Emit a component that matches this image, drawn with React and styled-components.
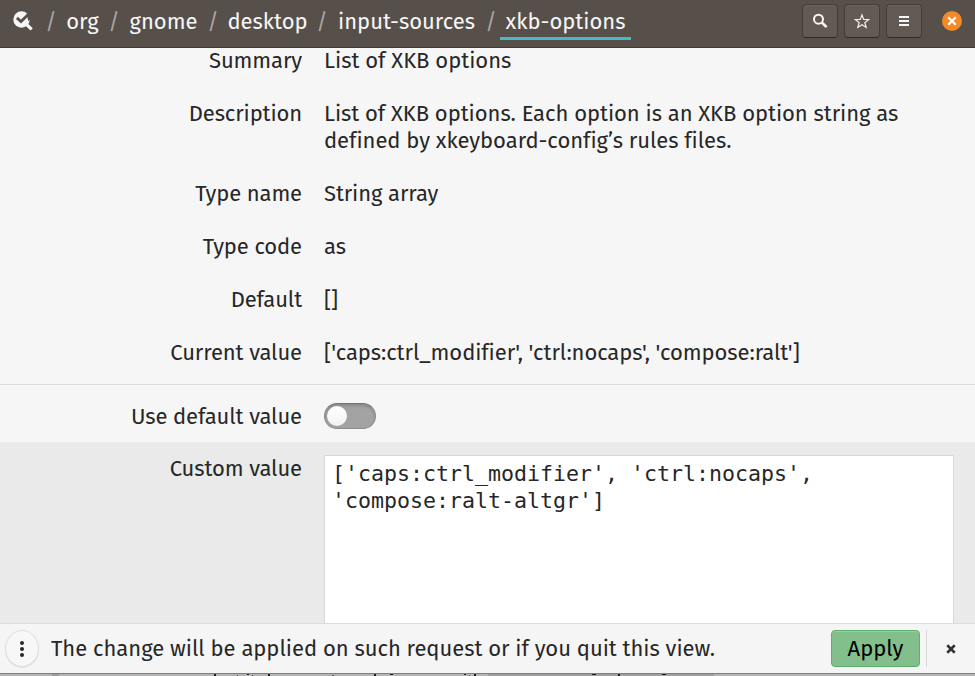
import React from 'react';
import styled, { createGlobalStyle, css } from 'styled-components';

const Global = createGlobalStyle`
  * { box-sizing: border-box; }
  html, body { margin: 0; padding: 0; overflow: hidden; }
  body {
    font-family: "Fira Sans", "Noto Sans", sans-serif;
    font-size: 22px;
    line-height: 27px;
    color: #272727;
    background: #f6f6f6;
  }
`;

const Window = styled.div`
  width: 975px;
  height: 676px;
  display: flex;
  flex-direction: column;
  overflow: hidden;
  background: #f6f6f6;
`;

const HeaderBar = styled.header`
  flex: none;
  height: 48px;
  display: flex;
  align-items: flex-start;
  background: #574f4a;
  border-bottom: 1px solid #473437;
  color: #f6f6f6;
`;

const PathIcon = styled.svg`
  flex: none;
  margin: 11px 0 0 13px;
`;

const Breadcrumbs = styled.nav`
  flex: 1;
  display: flex;
  padding-left: 8px;
`;

const Slash = styled.span`
  flex: none;
  width: 18px;
  margin-top: 8px;
  text-align: center;
  color: #aaa6a3;
`;

const Crumb = styled.span`
  flex: none;
  height: 40px;
  width: ${(p) => p.$width}px;
  padding-top: 8px;
  text-align: center;
  white-space: nowrap;
  ${(p) => p.$active && css`
    background: linear-gradient(#48b9c7, #48b9c7) bottom / 100% 3px no-repeat;
    clip-path: polygon(0 0, 100% 0, 100% 100%, 0 100%);
  `}
`;

const HeaderButtons = styled.div`
  display: flex;
  gap: 6px;
  padding-top: 4px;
`;

const HeaderButton = styled.button`
  width: 36px;
  height: 34px;
  padding: 0;
  display: flex;
  align-items: center;
  justify-content: center;
  border: 1px solid #433c38;
  border-bottom-color: #2f2a27;
  border-radius: 4px;
  background: #635a54;
  box-shadow: inset 0 1px #6c635e;
`;

const CloseWindow = styled.button`
  width: 20px;
  height: 20px;
  padding: 0;
  margin: 11px 13px 0 20px;
  border: 0;
  border-radius: 50%;
  display: flex;
  align-items: center;
  justify-content: center;
  background: #f28b27;
`;

const Properties = styled.section`
  flex: none;
  height: 338px;
  margin-top: -1px;
  display: flex;
  flex-direction: column;
  gap: 26px;
  border-bottom: 1px solid #dcdcdc;
`;

const Row = styled.div`
  display: grid;
  grid-template-columns: 302px 630px;
  column-gap: 22px;
`;

const Label = styled.div`
  text-align: right;
  white-space: nowrap;
  letter-spacing: -0.12px;
`;

const Value = styled.div`
  white-space: pre;
  letter-spacing: ${(p) => p.$tracking || 0}px;
`;

const DefaultSection = styled.section`
  flex: none;
  height: 57px;
  padding-top: 18px;
`;

const Switch = styled.div`
  width: 52px;
  height: 26px;
  border: 1px solid #8c8c8c;
  border-top-color: #757575;
  border-radius: 13px;
  background: #a3a3a3;
  box-shadow: inset 0 2px 3px rgba(0, 0, 0, 0.16);
  padding: 2px;
`;

const Knob = styled.div`
  width: 20px;
  height: 20px;
  border-radius: 50%;
  background: linear-gradient(#fff, #f2f2f2);
`;

const CustomSection = styled.section`
  flex: 1;
  min-height: 0;
  padding-top: 13px;
  background: #eaeaea;
`;

const Editor = styled.div`
  height: 180px;
  padding: 4px 7px;
  border: 1px solid #d8d8d8;
  background: #fff;
  font-family: "DejaVu Sans Mono", monospace;
  font-size: 21.6px;
  line-height: 27px;
  white-space: pre;
`;

const Notice = styled.footer`
  flex: none;
  position: relative;
  height: 50px;
  display: flex;
  align-items: center;
  padding: 0 0 0 5px;
  border-top: 1px solid #dcdcdc;
  background: #f5f5f5;
`;

const MenuButton = styled.button`
  width: 34px;
  height: 37px;
  padding: 0;
  border: 1px solid #dedede;
  border-radius: 50%;
  display: flex;
  align-items: center;
  justify-content: center;
  background: #f7f7f7;
  box-shadow: 0 1px 1px rgba(0, 0, 0, 0.08);
`;

const Message = styled.div`
  flex: 1;
  margin-left: 12px;
  white-space: nowrap;
  letter-spacing: -0.025px;
`;

const ApplyButton = styled.button`
  width: 89px;
  height: 37px;
  padding: 0;
  border: 1px solid #5bb16b;
  border-radius: 4px;
  background: #83bf8d;
  box-shadow: inset 0 1px #9acca2;
  font: inherit;
  color: #000;
`;

const Divider = styled.div`
  width: 1px;
  height: 37px;
  margin-left: 6px;
  background: #d8d8d8;
`;

const Dismiss = styled.button`
  width: 48px;
  padding: 0;
  border: 0;
  background: none;
  display: flex;
  justify-content: center;
`;

const Backdrop = styled.div`
  flex: none;
  height: 3px;
  overflow: hidden;
  background: linear-gradient(#808080 1px, transparent 1px),
    linear-gradient(90deg, #b4b4b4 52px, #9b9b9b 52px 59px, #b4b4b4 59px 488px, #a0a0a0 488px 714px, #b4b4b4 714px);
`;

const Marks = styled.svg`
  display: block;
`;

const properties = [
  ['Summary', 'List of XKB options', 0],
  ['Description', 'List of XKB options. Each option is an XKB option string as\ndefined by xkeyboard-config’s rules files.', -0.04],
  ['Type name', 'String array', -0.1],
  ['Type code', 'as', 0],
  ['Default', '[]', 0],
  ['Current value', "['caps:ctrl_modifier', 'ctrl:nocaps', 'compose:ralt']", -0.085],
];

const crumbs = [
  ['org', 45],
  ['gnome', 81],
  ['desktop', 91],
  ['input-sources', 151],
  ['xkb-options', 131],
];

const Cross = ({ size, color, weight }) => (
  <svg width={size} height={size} viewBox="0 0 8 8">
    <path d="M1 1 7 7M7 1 1 7" stroke={color} strokeWidth={weight} fill="none" />
  </svg>
);

export default function App() {
  return (
    <>
      <Global />
      <Window>
        <HeaderBar>
          <PathIcon width="21" height="21" viewBox="0 0 21 21">
            <circle cx="8.5" cy="8.5" r="8.2" fill="#f6f6f6" />
            <path d="m12.5 12.5 6.2 5.9" stroke="#f6f6f6" strokeWidth="3.2" />
            <path d="M3.9 6.9 8 10.6 17.8 1" stroke="#574f4a" strokeWidth="2.8" fill="none" />
            <path d="M13.8 3 18 1v7l-2.8 2Z" fill="#574f4a" />
          </PathIcon>
          <Breadcrumbs>
            {crumbs.map(([name, width], i) => (
              <React.Fragment key={name}>
                <Slash>/</Slash>
                <Crumb $width={width} $active={i === crumbs.length - 1}>{name}</Crumb>
              </React.Fragment>
            ))}
          </Breadcrumbs>
          <HeaderButtons>
            <HeaderButton aria-label="Search">
              <svg width="16" height="16" viewBox="0 0 16 16" fill="none" stroke="#f6f6f6">
                <circle cx="6.5" cy="6.2" r="4.5" strokeWidth="2" />
                <path d="m9.8 9.5 4.8 4.6" strokeWidth="2.6" />
              </svg>
            </HeaderButton>
            <HeaderButton aria-label="Bookmark">
              <svg width="16" height="16" viewBox="0 0 16 16" fill="none" stroke="#f0f0f0" strokeWidth="1.2">
                <path d="m8 1.9 1.7 4.5 5 .2-3.9 3.1 1.4 4.7L8 11.7l-4.2 2.7 1.4-4.7-3.9-3.1 5-.2Z" />
              </svg>
            </HeaderButton>
            <HeaderButton aria-label="Menu">
              <svg width="10" height="10" viewBox="0 0 10 10" fill="#f6f6f6">
                <path d="M0 0h10v2H0ZM0 4h10v2H0ZM0 8h10v2H0Z" />
              </svg>
            </HeaderButton>
          </HeaderButtons>
          <CloseWindow aria-label="Close">
            <Cross size={10} color="#fff" weight={1.9} />
          </CloseWindow>
        </HeaderBar>

        <Properties>
          {properties.map(([label, value, tracking]) => (
            <Row key={label}>
              <Label>{label}</Label>
              <Value $tracking={tracking}>{value}</Value>
            </Row>
          ))}
        </Properties>

        <DefaultSection>
          <Row>
            <Label>Use default value</Label>
            <Switch><Knob /></Switch>
          </Row>
        </DefaultSection>

        <CustomSection>
          <Row>
            <Label>Custom value</Label>
            <Editor>{"['caps:ctrl_modifier', 'ctrl:nocaps',\n'compose:ralt-altgr']"}</Editor>
          </Row>
        </CustomSection>

        <Notice>
          <MenuButton aria-label="More">
            <svg width="4" height="16" viewBox="0 0 4 16" fill="#272727">
              <circle cx="2" cy="2" r="2" />
              <circle cx="2" cy="8" r="2" />
              <circle cx="2" cy="14" r="2" />
            </svg>
          </MenuButton>
          <Message>The change will be applied on such request or if you quit this view.</Message>
          <ApplyButton>Apply</ApplyButton>
          <Divider />
          <Dismiss aria-label="Dismiss">
            <Cross size={10} color="#333" weight={2} />
          </Dismiss>
        </Notice>
        <Backdrop>
          <Marks width="975" height="3" viewBox="0 0 975 3">
            <path
              d="M214 1h2v2h-2ZM247 1h2v1h-2ZM268 1h2v2h-2ZM374 1h2v2h-2ZM390 1h3v1h-3ZM464 1h2v1h-2ZM474 1h2v2h-2ZM592 1h4v1h-4ZM618 1h2v2h-2ZM662 1h4v1h-4Z"
              fill="#222"
            />
            <path d="M237 2h1v1h-1ZM252 2h1v1h-1ZM332 2h2v1h-2ZM469 2h1v1h-1Z" fill="#555" />
          </Marks>
        </Backdrop>
      </Window>
    </>
  );
}
